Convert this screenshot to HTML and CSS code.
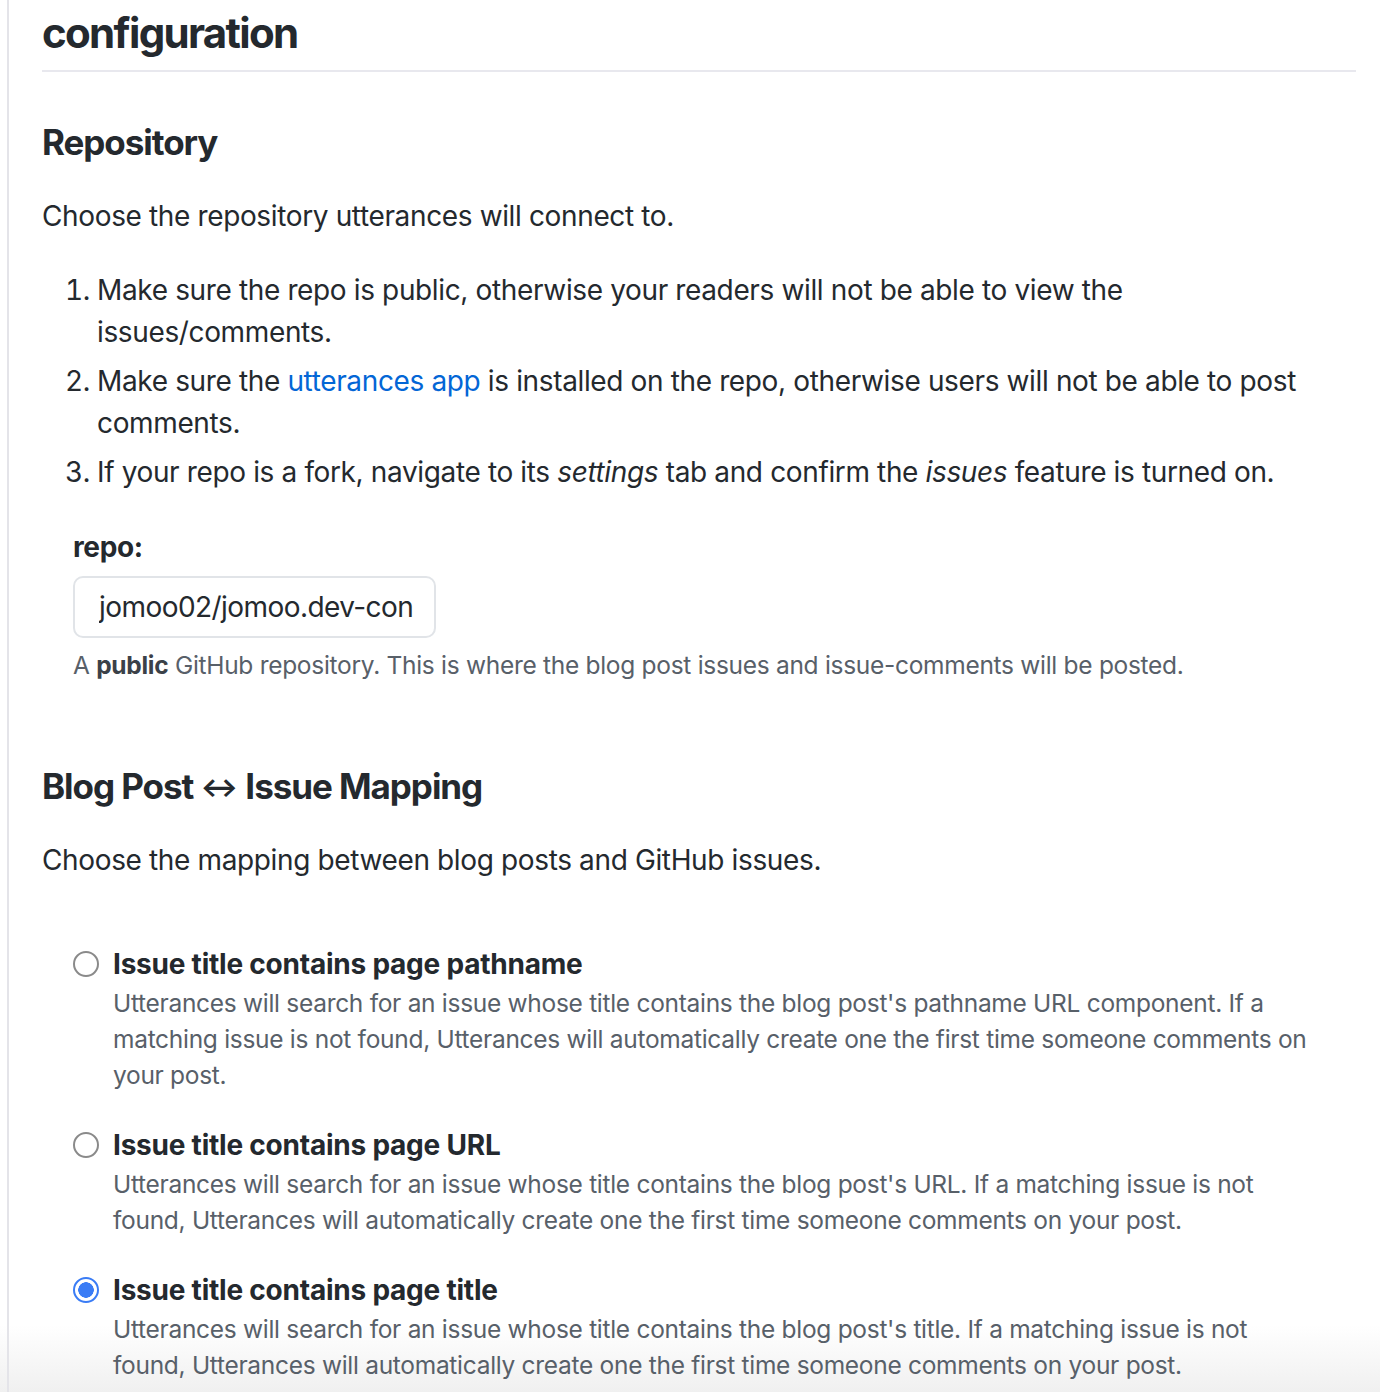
FILE: index.html
```html
<!DOCTYPE html>
<html lang="en">
<head>
<meta charset="utf-8">
<title>utterances configuration</title>
<link rel="stylesheet" href="styles.css">
</head>
<body>
<main class="page">
  <h2 class="title">configuration</h2>

  <h3 class="section">Repository</h3>
  <p class="lead">Choose the repository utterances will connect to.</p>
  <ol class="steps">
    <li>Make sure the repo is public, otherwise your readers will not be able to view the issues/comments.</li>
    <li>Make sure the <a href="#" class="link">utterances app</a> is installed on the repo, otherwise users will not be able to post comments.</li>
    <li>If your repo is a fork, navigate to its <em>settings</em> tab and confirm the <em>issues</em> feature is turned on.</li>
  </ol>

  <div class="field">
    <label class="field-label" for="repo">repo:</label>
    <input class="field-input" id="repo" type="text" value="jomoo02/jomoo.dev-con">
    <p class="note">A <strong>public</strong> GitHub repository. This is where the blog post issues and issue-comments will be posted.</p>
  </div>

  <h3 class="section section-map">Blog Post <span class="arrow">↔</span> Issue Mapping</h3>
  <p class="lead">Choose the mapping between blog posts and GitHub issues.</p>

  <div class="options">
    <div class="option">
      <label class="option-label"><input class="radio" type="radio" name="map">Issue title contains page pathname</label>
      <p class="option-desc">Utterances will search for an issue whose title contains the blog post's pathname URL component. If a matching issue is not found, Utterances will automatically create one the first time someone comments on your post.</p>
    </div>
    <div class="option">
      <label class="option-label"><input class="radio" type="radio" name="map">Issue title contains page URL</label>
      <p class="option-desc">Utterances will search for an issue whose title contains the blog post's URL. If a matching issue is not found, Utterances will automatically create one the first time someone comments on your post.</p>
    </div>
    <div class="option">
      <label class="option-label"><input class="radio" type="radio" name="map" checked>Issue title contains page title</label>
      <p class="option-desc">Utterances will search for an issue whose title contains the blog post's title. If a matching issue is not found, Utterances will automatically create one the first time someone comments on your post.</p>
    </div>
  </div>
</main>
</body>
</html>
```

FILE: styles.css
```css
html, body {
  margin: 0;
  padding: 0;
}

html {
  background: #ffffff;
}

body {
  font-family: Inter, "Noto Sans", "Liberation Sans", sans-serif;
  font-size: 28px;
  line-height: 42px;
  letter-spacing: -0.013em;
  color: #24292e;
  overflow: hidden;
  height: 1392px;
  background: linear-gradient(to bottom, #ffffff 0, #ffffff 1325px, #f0f0f0 1392px);
}

.page {
  margin-left: 7px;
  margin-right: 24px;
  border-left: 2px solid #e4e4e9;
  padding: 7px 0 0 33px;
  min-height: 1392px;
  box-sizing: border-box;
}

.title {
  margin: 0;
  font-size: 42px;
  line-height: 52px;
  font-weight: 700;
  letter-spacing: -0.04em;
  padding-bottom: 11px;
  border-bottom: 2px solid #e8e8ee;
}

.section {
  margin: 48px 0 0;
  font-size: 35px;
  line-height: 44px;
  font-weight: 700;
  letter-spacing: -0.03em;
}

.section-map {
  margin-top: 81px;
}

.arrow {
  font-size: 0.8em;
  line-height: 0;
  letter-spacing: 0;
  vertical-align: 2px;
}

.lead {
  margin: 31px 0 0;
}

.steps {
  margin: 32px 0 0;
  padding-left: 55px;
}

.steps li + li {
  margin-top: 7px;
}

.link {
  color: #0366d6;
  text-decoration: none;
}

.field {
  margin: 33px 0 0 31px;
  display: flex;
  flex-direction: column;
  align-items: flex-start;
}

.field-label {
  font-weight: 700;
}

.field-input {
  margin-top: 8px;
  width: 363px;
  height: 62px;
  box-sizing: border-box;
  border: 2px solid #e1e4e8;
  border-radius: 10px;
  padding: 0 14px 0 24px;
  font-family: inherit;
  font-size: 28px;
  letter-spacing: -0.02em;
  color: #24292e;
  background: #ffffff;
  outline: none;
}

.note {
  margin: 9px 0 0;
  font-size: 24.5px;
  line-height: 36px;
  letter-spacing: -0.012em;
  color: #586069;
}

.note strong {
  color: #3b4148;
  font-weight: 700;
}

.options {
  margin: 62px 38px 0 31px;
  display: flex;
  flex-direction: column;
  gap: 31px;
}

.option-label {
  display: flex;
  align-items: center;
  gap: 14px;
  font-weight: 700;
  letter-spacing: -0.008em;
}

.radio {
  appearance: none;
  -webkit-appearance: none;
  margin: 0;
  width: 26px;
  height: 26px;
  border: 2px solid #8a8a8a;
  border-radius: 50%;
  background: #ffffff;
  box-sizing: border-box;
  flex: none;
}

.radio:checked {
  border: 2px solid #3a7cf5;
  background: radial-gradient(circle, #3a7cf5 0, #3a7cf5 7.5px, #ffffff 8px);
}

.option-desc {
  margin: 0 0 0 40px;
  font-size: 24.5px;
  line-height: 36px;
  letter-spacing: -0.012em;
  color: #586069;
}
```
